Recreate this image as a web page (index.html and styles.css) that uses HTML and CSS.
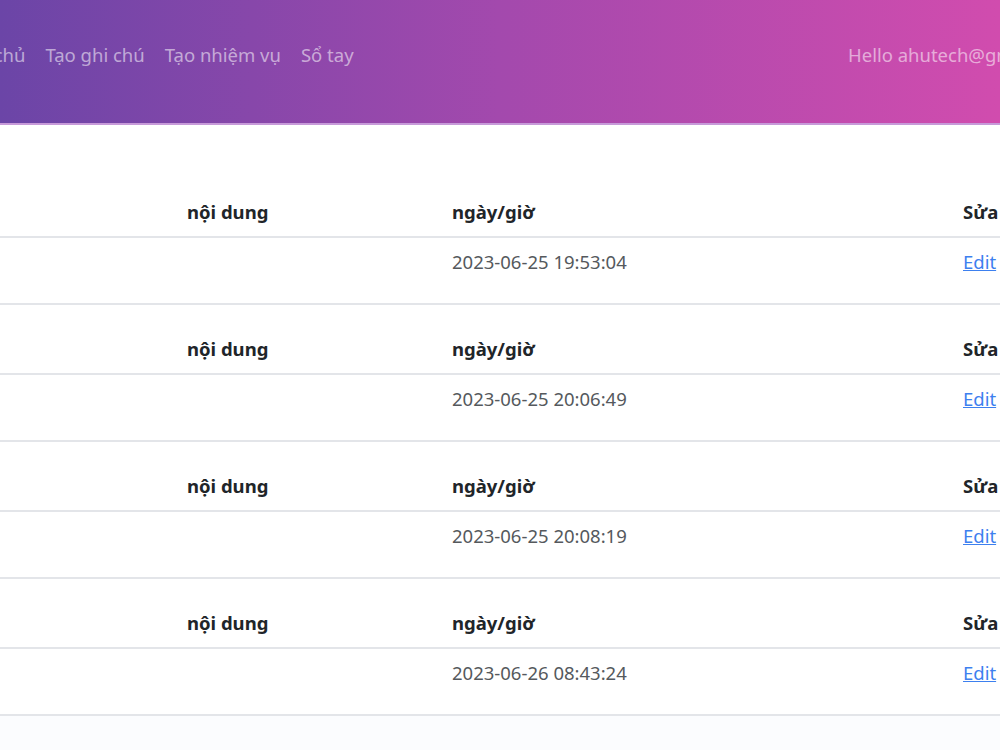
FILE: index.html
```html
<!DOCTYPE html>
<html lang="vi">
<head>
    <meta charset="UTF-8">
    <meta name="viewport" content="width=device-width, initial-scale=1.0">
    <title>Ghi chú</title>
    <link rel="stylesheet" href="styles.css">
</head>
<body>

    <header class = "navbar">
        <div class = "navbar__inner">
            <ul class = "navbar__links">
                <li><a href="#">Trang chủ</a></li>
                <li><a href="#">Tạo ghi chú</a></li>
                <li><a href="#">Tạo nhiệm vụ</a></li>
                <li><a href="#">Sổ tay</a></li>
            </ul>
            <div class = "navbar__user"><a href="#">Hello ahutech@gmail.com</a></div>
        </div>
    </header>

    <section class = "main">
        <table class = "note__table">
            <colgroup><col class="c1"><col class="c2"><col class="c3"><col class="c4"><col class="c5"></colgroup>
            <thead><tr><th>tiêu đề</th><th>nội dung</th><th>ngày/giờ</th><th>Sửa</th><th>Xóa</th></tr></thead>
            <tbody><tr><td></td><td></td><td class="date">2023-06-25 19:53:04</td><td><a href="#">Edit</a></td><td></td></tr></tbody>
        </table>
        <table class = "note__table">
            <colgroup><col class="c1"><col class="c2"><col class="c3"><col class="c4"><col class="c5"></colgroup>
            <thead><tr><th>tiêu đề</th><th>nội dung</th><th>ngày/giờ</th><th>Sửa</th><th>Xóa</th></tr></thead>
            <tbody><tr><td></td><td></td><td class="date">2023-06-25 20:06:49</td><td><a href="#">Edit</a></td><td></td></tr></tbody>
        </table>
        <table class = "note__table">
            <colgroup><col class="c1"><col class="c2"><col class="c3"><col class="c4"><col class="c5"></colgroup>
            <thead><tr><th>tiêu đề</th><th>nội dung</th><th>ngày/giờ</th><th>Sửa</th><th>Xóa</th></tr></thead>
            <tbody><tr><td></td><td></td><td class="date">2023-06-25 20:08:19</td><td><a href="#">Edit</a></td><td></td></tr></tbody>
        </table>
        <table class = "note__table">
            <colgroup><col class="c1"><col class="c2"><col class="c3"><col class="c4"><col class="c5"></colgroup>
            <thead><tr><th>tiêu đề</th><th>nội dung</th><th>ngày/giờ</th><th>Sửa</th><th>Xóa</th></tr></thead>
            <tbody><tr><td></td><td></td><td class="date">2023-06-26 08:43:24</td><td><a href="#">Edit</a></td><td></td></tr></tbody>
        </table>
    </section>

</body>
</html>
```

FILE: styles.css
```css
*{
    box-sizing: border-box;
    padding: 0;margin: 0;
}
body{
    background: #fbfcfe;
    font-family: "Noto Sans", "Open Sans", sans-serif;
    font-size: 18.5px;
    color: #212529;
    overflow: hidden;
}

.navbar{
    height: 125px;
    background: linear-gradient(90deg, #6b45a7 0%, #a349ad 50%, #d14cae 100%);
    border-bottom: 2px solid #c79ad9;
}
.navbar__inner{
    display: flex;
    align-items: center;
    height: 108px;
    margin-left: -71px;
    white-space: nowrap;
}
.navbar__links{
    display: flex;
    list-style: none;
    flex: 0 0 909px;
}
.navbar__user{
    flex-shrink: 0;
}
.navbar a{
    display: block;
    padding: 0 10px;
    color: rgba(255,255,255,.55);
    text-decoration: none;
}

.main{
    background: #fff;
    padding-top: 63px;
}
.note__table{
    width: 1250px;
    table-layout: fixed;
    border-collapse: collapse;
    margin-bottom: 20px;
    background: #fff;
}
.note__table:last-child{
    margin-bottom: 0;
}
.c1{ width: 179px; }
.c2{ width: 265px; }
.c3{ width: 511px; }
.c4{ width: 140px; }
.note__table th,
.note__table td{
    text-align: left;
    padding: 10px 8px;
    line-height: 28px;
    border-bottom: 2px solid #e3e5e9;
    white-space: nowrap;
}
.note__table th{
    font-weight: 700;
}
.note__table th:first-child,
.note__table th:last-child{
    color: transparent;
}
.note__table td{
    height: 67px;
    vertical-align: top;
    padding-top: 10px;
}
.date{
    color: #55595d;
}
.note__table td a{
    color: #3d80ef;
}
```
